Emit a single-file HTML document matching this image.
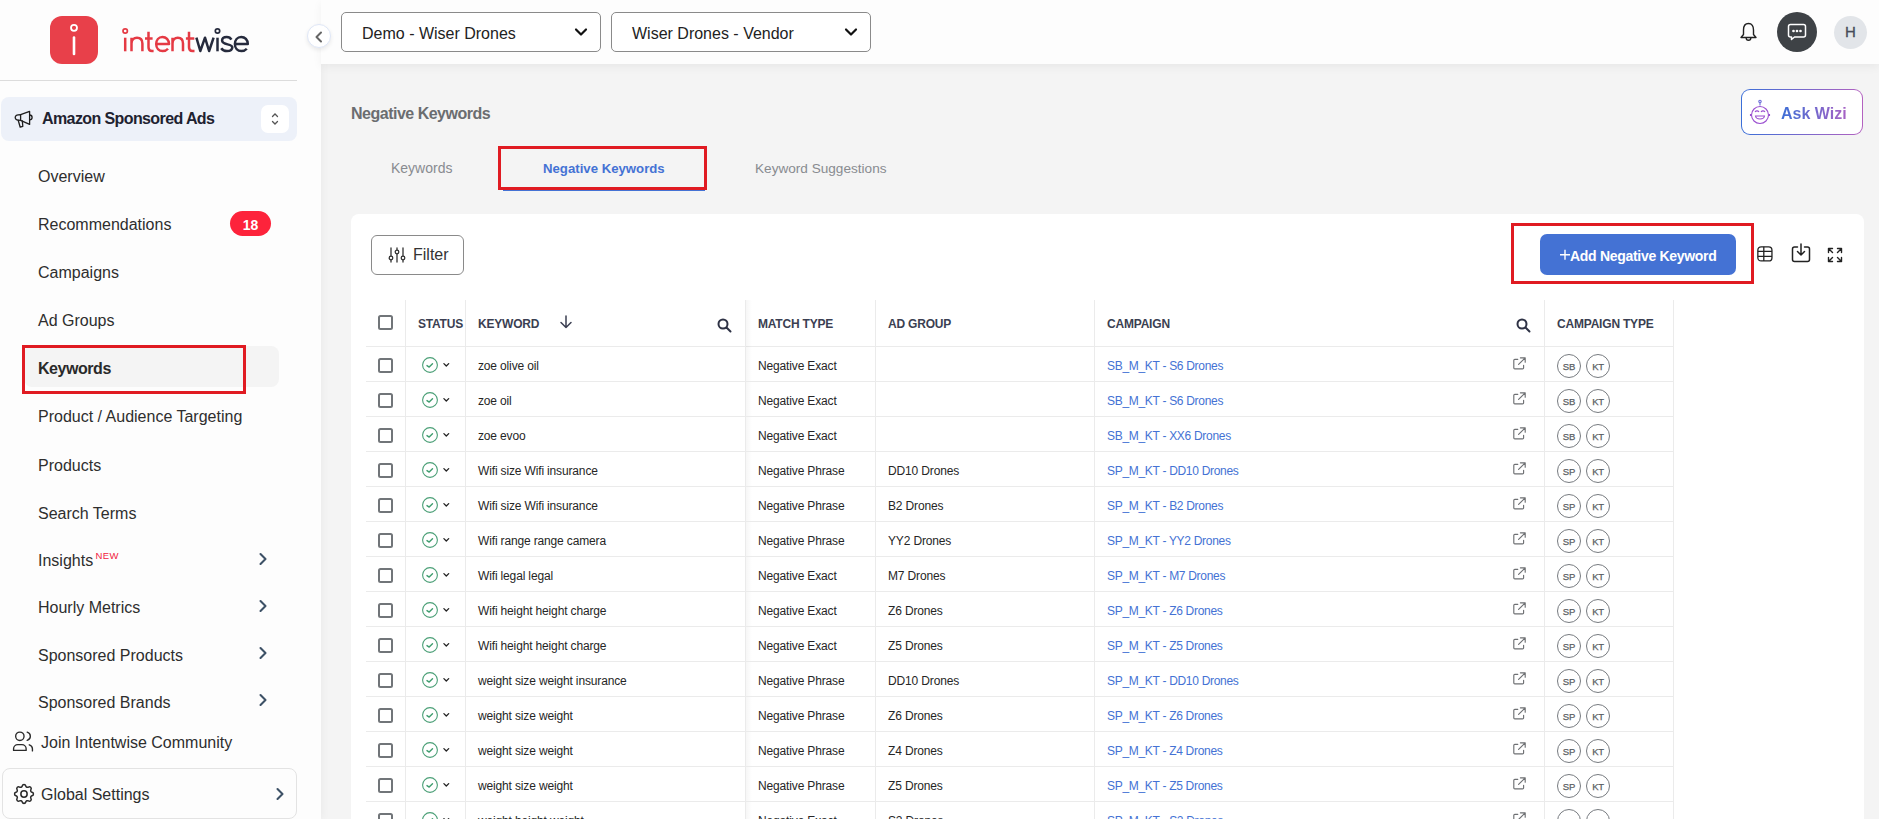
<!DOCTYPE html>
<html><head><meta charset="utf-8"><style>
*{margin:0;padding:0;box-sizing:content-box}
html,body{width:1879px;height:819px;overflow:hidden}
body{position:relative;background:#f4f4f4;font-family:"Liberation Sans",sans-serif;color:#333}
.a{position:absolute}
.t{position:absolute;white-space:nowrap}
#sb{position:absolute;left:0;top:0;width:321px;height:819px;background:#fdfdfd;box-shadow:2px 0 8px rgba(0,0,0,0.04)}
#hdr{position:absolute;left:321px;top:0;width:1558px;height:64px;background:#fdfdfd;box-shadow:0 3px 9px rgba(0,0,0,0.05)}
.ct{width:22px;height:22px;border:1px solid #777b80;border-radius:50%;font-size:9.5px;line-height:24px;text-align:center;color:#5a5e63;letter-spacing:-0.2px;-webkit-text-stroke:0.25px #5a5e63}
</style></head><body>
<div id="sb"></div>
<svg class="a" style="left:50px;top:16px" width="48" height="48" viewBox="0 0 48 48">
<rect x="0" y="0" width="48" height="48" rx="12" fill="#e8404a"/>
<circle cx="24" cy="11.8" r="3" fill="none" stroke="#fff" stroke-width="1.8"/>
<line x1="24" y1="21.5" x2="24" y2="38" stroke="#fff" stroke-width="2.6" stroke-linecap="round"/>
</svg>
<svg class="a" style="left:118px;top:24px" width="136" height="32" viewBox="0 0 136 32" fill="none" stroke-width="2.5" stroke-linejoin="round">
<g stroke="#e53a44">
<circle cx="7.2" cy="7" r="2.2" stroke-width="1.7"/><path d="M7.2 13.7 V27.3"/>
<path d="M13.5 27.3 V13.7 M13.5 19.5 C13.5 15.5 16 13.7 19 13.7 C22.2 13.7 24.4 15.5 24.4 19.5 V27.3"/>
<path d="M30.5 7.8 V23.2 C30.5 26 32 27 34 27 H35.6 M27 14.5 H34.6"/>
<path d="M38.2 20.1 H51 C51 16 48 12.9 44.5 12.9 C40.7 12.9 38.2 16 38.2 20.1 C38.2 24.3 40.9 27.1 44.6 27.1 C47 27.1 48.8 26.2 50 24.8"/>
<path d="M54.5 27.3 V13.7 M54.5 19.5 C54.5 15.5 57 13.7 59.8 13.7 C63 13.7 65 15.5 65 19.5 V27.3"/>
<path d="M71 7.8 V23.2 C71 26 72.5 27 74.5 27 H76.5 M67.9 14.5 H76.3"/>
</g>
<g stroke="#262b3d">
<path d="M78.4 13.7 L82.3 27 L87 13.7 L91.1 27 L95.6 13.7"/>
<circle cx="99.5" cy="7" r="2.2" stroke-width="1.7"/><path d="M99.5 13.7 V27.3"/>
<path d="M113.4 15.6 C112.5 13.7 110.8 12.9 108.7 12.9 C105.9 12.9 104.1 14.3 104.1 16.5 C104.1 21.5 114.3 19.3 114.3 23.3 C114.3 25.8 112.2 27.1 109 27.1 C106.5 27.1 104.5 26.2 103.2 24.3"/>
<path d="M116.9 20.1 H129.8 C129.8 16 127 12.9 123.2 12.9 C119.4 12.9 116.9 16 116.9 20.1 C116.9 24.3 119.6 27.1 123.3 27.1 C125.8 27.1 127.6 26.2 128.8 24.8"/>
</g></svg>
<div class="a" style="left:0;top:80px;width:297px;height:1px;background:#dcdcdc"></div>
<div class="a" style="left:1px;top:97px;width:296px;height:44px;border-radius:8px;background:#edf1f9"></div>
<svg class="a" style="left:12px;top:109px" width="22" height="20" viewBox="0 0 22 20" fill="none" stroke="#1e1e1e" stroke-width="1.3" stroke-linejoin="round" stroke-linecap="round">
<path d="M8.6 5.6 C5 5.6 3.2 7 3.2 8.4 C3.2 10 5 11.3 8.6 11.3 Z"/><path d="M8.6 5.6 L17.6 2.4 V15.4 L8.6 11.3"/><path d="M17.6 6 C19.5 6 20.1 7.2 20.1 8.5 C20.1 9.8 19.5 10.9 17.6 10.9"/><path d="M6.2 11.3 L8.2 18.2 L10.8 17.3 L10.3 11.8"/>
</svg>
<div class="t " style="left:42px;top:109.46px;font-size:16px;line-height:20px;color:#1e2230;font-weight:bold;letter-spacing:-0.6px;">Amazon Sponsored Ads</div>
<div class="a" style="left:261px;top:105px;width:28px;height:28px;border-radius:7px;background:#fff"></div>
<svg class="a" style="left:271px;top:112px" width="8" height="14" viewBox="0 0 8 14" fill="none" stroke="#555" stroke-width="1.3" stroke-linecap="round"><path d="M1.5 4.5 L4 2 L6.5 4.5"/><path d="M1.5 9.5 L4 12 L6.5 9.5"/></svg>
<div class="a" style="left:24px;top:346px;width:255px;height:41px;border-radius:8px;background:#f4f4f4"></div>
<div class="t " style="left:38px;top:167.06px;font-size:16px;line-height:20px;color:#2e2e2e;font-weight:normal;">Overview</div>
<div class="t " style="left:38px;top:215.06px;font-size:16px;line-height:20px;color:#2e2e2e;font-weight:normal;">Recommendations</div>
<div class="t " style="left:38px;top:263.06px;font-size:16px;line-height:20px;color:#2e2e2e;font-weight:normal;">Campaigns</div>
<div class="t " style="left:38px;top:311.06px;font-size:16px;line-height:20px;color:#2e2e2e;font-weight:normal;">Ad Groups</div>
<div class="t " style="left:38px;top:359.06px;font-size:16px;line-height:20px;color:#2a2a2a;font-weight:bold;letter-spacing:-0.45px;">Keywords</div>
<div class="t " style="left:38px;top:407.06px;font-size:16px;line-height:20px;color:#2e2e2e;font-weight:normal;">Product / Audience Targeting</div>
<div class="t " style="left:38px;top:455.96px;font-size:16px;line-height:20px;color:#2e2e2e;font-weight:normal;">Products</div>
<div class="t " style="left:38px;top:503.76px;font-size:16px;line-height:20px;color:#2e2e2e;font-weight:normal;">Search Terms</div>
<div class="t " style="left:38px;top:550.96px;font-size:16px;line-height:20px;color:#2e2e2e;font-weight:normal;">Insights</div>
<div class="t " style="left:38px;top:598.46px;font-size:16px;line-height:20px;color:#2e2e2e;font-weight:normal;">Hourly Metrics</div>
<div class="t " style="left:38px;top:645.66px;font-size:16px;line-height:20px;color:#2e2e2e;font-weight:normal;">Sponsored Products</div>
<div class="t " style="left:38px;top:692.86px;font-size:16px;line-height:20px;color:#2e2e2e;font-weight:normal;">Sponsored Brands</div>
<div class="a" style="left:230px;top:211px;width:41px;height:25px;border-radius:13px;background:#fd233b;color:#fff;font-weight:bold;font-size:14px;line-height:28.5px;text-align:center">18</div>
<div class="t " style="left:95.5px;top:549.71px;font-size:9.5px;line-height:12px;color:#f1233d;font-weight:normal;letter-spacing:0.4px;">NEW</div>
<svg class="a" style="left:257px;top:551.5px" width="12" height="14" viewBox="0 0 12 14" fill="none" stroke="#3d5166" stroke-width="2.1" stroke-linecap="round" stroke-linejoin="round"><path d="M3.5 2 L8.5 7 L3.5 12"/></svg>
<svg class="a" style="left:257px;top:599.0px" width="12" height="14" viewBox="0 0 12 14" fill="none" stroke="#3d5166" stroke-width="2.1" stroke-linecap="round" stroke-linejoin="round"><path d="M3.5 2 L8.5 7 L3.5 12"/></svg>
<svg class="a" style="left:257px;top:646.2px" width="12" height="14" viewBox="0 0 12 14" fill="none" stroke="#3d5166" stroke-width="2.1" stroke-linecap="round" stroke-linejoin="round"><path d="M3.5 2 L8.5 7 L3.5 12"/></svg>
<svg class="a" style="left:257px;top:693.4px" width="12" height="14" viewBox="0 0 12 14" fill="none" stroke="#3d5166" stroke-width="2.1" stroke-linecap="round" stroke-linejoin="round"><path d="M3.5 2 L8.5 7 L3.5 12"/></svg>
<div class="a" style="left:22px;top:345px;width:218px;height:43px;border:3px solid #e01b22"></div>
<svg class="a" style="left:12px;top:730.5px" width="22" height="21" viewBox="1.5 2 21 20" fill="none" stroke="#2a2a2a" stroke-width="1.3" stroke-linecap="round" stroke-linejoin="round">
<circle cx="9" cy="7" r="4"/><path d="M3 20.5 v-1.5 a4 4 0 0 1 4 -4 h4 a4 4 0 0 1 4 4 v1.5 Z"/><path d="M16 3.13 a4 4 0 0 1 0 7.75"/><path d="M21 21 v-2 a4 4 0 0 0 -3 -3.85"/>
</svg>
<div class="t " style="left:41px;top:733.46px;font-size:16px;line-height:20px;color:#2e2e2e;font-weight:normal;">Join Intentwise Community</div>
<div class="a" style="left:2px;top:768px;width:293px;height:49px;border:1px solid #e3e3e3;border-radius:8px;background:#fdfdfd"></div>
<svg class="a" style="left:13px;top:782.5px" width="22" height="22" viewBox="1.5 1.5 21 21" fill="none" stroke="#2a2a2a" stroke-width="1.45" stroke-linecap="round" stroke-linejoin="round">
<path d="M10.325 4.317c.426 -1.756 2.924 -1.756 3.35 0a1.724 1.724 0 0 0 2.573 1.066c1.543 -.94 3.31 .826 2.37 2.37a1.724 1.724 0 0 0 1.065 2.572c1.756 .426 1.756 2.924 0 3.35a1.724 1.724 0 0 0 -1.066 2.573c.94 1.543 -.826 3.31 -2.37 2.37a1.724 1.724 0 0 0 -2.572 1.065c-.426 1.756 -2.924 1.756 -3.35 0a1.724 1.724 0 0 0 -2.573 -1.066c-1.543 .94 -3.310 -.826 -2.37 -2.37a1.724 1.724 0 0 0 -1.065 -2.572c-1.756 -.426 -1.756 -2.924 0 -3.35a1.724 1.724 0 0 0 1.066 -2.573c-.94 -1.543 .826 -3.31 2.37 -2.37c1 .608 2.296 .07 2.572 -1.065z"/><circle cx="12" cy="12" r="3"/>
</svg>
<div class="t " style="left:41px;top:785.46px;font-size:16px;line-height:20px;color:#2e2e2e;font-weight:normal;">Global Settings</div>
<svg class="a" style="left:274px;top:787px" width="12" height="14" viewBox="0 0 12 14" fill="none" stroke="#3d5166" stroke-width="2.1" stroke-linecap="round" stroke-linejoin="round"><path d="M3.5 2 L8.5 7 L3.5 12"/></svg>
<div id="hdr"></div>
<div class="a" style="left:307px;top:24px;width:22px;height:22px;border-radius:50%;background:#fff;border:1px solid #dfe7f7;box-shadow:0 2px 4px rgba(0,0,0,0.08)"></div>
<svg class="a" style="left:312.5px;top:29.5px" width="12" height="14" viewBox="0 0 12 14" fill="none" stroke="#666" stroke-width="2" stroke-linecap="round" stroke-linejoin="round"><path d="M8 2.5 L3.5 7 L8 11.5"/></svg>
<div class="a" style="left:341px;top:12px;width:258px;height:38px;border:1px solid #8a8a8a;border-radius:5px;background:#fff"></div>
<div class="t " style="left:362px;top:23.96px;font-size:16px;line-height:20px;color:#222;font-weight:normal;">Demo - Wiser Drones</div>
<svg class="a" style="left:574px;top:27px" width="14" height="10" viewBox="0 0 14 10" fill="none" stroke="#111" stroke-width="2.2" stroke-linecap="round" stroke-linejoin="round"><path d="M2 2.5 L7 7.5 L12 2.5"/></svg>
<div class="a" style="left:611px;top:12px;width:258px;height:38px;border:1px solid #8a8a8a;border-radius:5px;background:#fff"></div>
<div class="t " style="left:632px;top:23.96px;font-size:16px;line-height:20px;color:#222;font-weight:normal;">Wiser Drones - Vendor</div>
<svg class="a" style="left:844px;top:27px" width="14" height="10" viewBox="0 0 14 10" fill="none" stroke="#111" stroke-width="2.2" stroke-linecap="round" stroke-linejoin="round"><path d="M2 2.5 L7 7.5 L12 2.5"/></svg>
<svg class="a" style="left:1739px;top:22px" width="19" height="20" viewBox="0 0 19 20" fill="none" stroke="#222" stroke-width="1.4" stroke-linejoin="round">
<path d="M9.5 1.5 C6 1.5 4.5 4.5 4.5 8 V12.5 L2 15.5 H17 L14.5 12.5 V8 C14.5 4.5 13 1.5 9.5 1.5 Z"/><path d="M7.2 16 C7.2 19 11.8 19 11.8 16"/>
</svg>
<div class="a" style="left:1777px;top:12px;width:40px;height:40px;border-radius:50%;background:#3e4246"></div>
<svg class="a" style="left:1787px;top:23px" width="20" height="19" viewBox="0 0 20 19" fill="none" stroke="#fff" stroke-width="1.5" stroke-linejoin="round">
<path d="M3.5 1.5 H16.5 C17.8 1.5 18.5 2.2 18.5 3.5 V12 C18.5 13.3 17.8 14 16.5 14 H7.5 L4.5 16.5 V14 H3.5 C2.2 14 1.5 13.3 1.5 12 V3.5 C1.5 2.2 2.2 1.5 3.5 1.5 Z"/>
<circle cx="6.5" cy="8" r="0.6" fill="#fff"/><circle cx="10" cy="8" r="0.6" fill="#fff"/><circle cx="13.5" cy="8" r="0.6" fill="#fff"/>
</svg>
<div class="a" style="left:1834px;top:16px;width:33px;height:33px;border-radius:50%;background:#e2e5e9;color:#464c5a;font-size:15px;line-height:31px;text-align:center;-webkit-text-stroke:0.3px #464c5a">H</div>
<div class="t " style="left:351px;top:103.96px;font-size:16px;line-height:20px;color:#6b6d70;font-weight:bold;letter-spacing:-0.5px;">Negative Keywords</div>
<div class="a" style="left:1741px;top:89px;width:122px;height:46px;border-radius:9px;background:linear-gradient(90deg,#3a6fd8,#b462c0)"></div>
<div class="a" style="left:1742px;top:90px;width:120px;height:44px;border-radius:8px;background:#fff"></div>
<svg class="a" style="left:1749px;top:99px" width="24" height="27" viewBox="0 0 24 27" fill="none" stroke="#9b4fd0" stroke-width="1.1">
<circle cx="11" cy="2.5" r="1.2" stroke="#6a6ad8"/><path d="M11 3.8 V6.5" stroke="#6a6ad8"/>
<circle cx="11" cy="16" r="8.5"/><path d="M6 13 C7 11.5 9 11.5 10 13 M12 13 C13 11.5 15 11.5 16 13"/><path d="M6.5 17 H15.5 C15 21 7 21 6.5 17 Z"/><path d="M1.5 15 V17 M20.5 15 V17"/>
</svg>
<div class="t " style="left:1781px;top:103.96px;font-size:16px;line-height:20px;color:#5b6fd6;font-weight:bold;background:linear-gradient(90deg,#3e6fd6,#a862c4);-webkit-background-clip:text;background-clip:text;color:transparent;">Ask Wizi</div>
<div class="t " style="left:391px;top:158.15px;font-size:14px;line-height:20px;color:#888b90;font-weight:normal;">Keywords</div>
<div class="t " style="left:543px;top:158.93px;font-size:13.2px;line-height:20px;color:#4472d4;font-weight:bold;">Negative Keywords</div>
<div class="t " style="left:755px;top:158.79px;font-size:13.6px;line-height:20px;color:#888b90;font-weight:normal;">Keyword Suggestions</div>
<div class="a" style="left:503px;top:189px;width:202px;height:2px;background:#4472d4"></div>
<div class="a" style="left:498px;top:146px;width:203px;height:38px;border:3px solid #e01b22"></div>
<div class="a" style="left:351px;top:214px;width:1513px;height:640px;border-radius:8px;background:#fff"></div>
<div class="a" style="left:371px;top:235px;width:91px;height:38px;border:1px solid #8a8a8a;border-radius:6px"></div>
<svg class="a" style="left:388px;top:247px" width="18" height="16" viewBox="0 0 18 16" fill="none" stroke="#333" stroke-width="1.3" stroke-linecap="round">
<path d="M3 1 V15 M9 1 V15 M15 1 V15"/><circle cx="3" cy="11" r="1.8" fill="#fff"/><circle cx="9" cy="5" r="1.8" fill="#fff"/><circle cx="15" cy="11" r="1.8" fill="#fff"/>
</svg>
<div class="t " style="left:413px;top:245.46px;font-size:16px;line-height:20px;color:#333;font-weight:normal;">Filter</div>
<div class="a" style="left:1540px;top:234px;width:196px;height:41px;border-radius:7px;background:#4472d4"></div>
<svg class="a" style="left:1559px;top:248px" width="12" height="14" viewBox="0 0 12 14" fill="none" stroke="#fff" stroke-width="1.4"><path d="M1 6.8 H11 M6 1.8 V11.8"/></svg>
<div class="t " style="left:1570px;top:245.55px;font-size:14px;line-height:20px;color:#fff;font-weight:bold;letter-spacing:-0.3px;">Add Negative Keyword</div>
<div class="a" style="left:1511px;top:223px;width:237px;height:55px;border:3px solid #e01b22"></div>
<svg class="a" style="left:1756px;top:245px" width="18" height="18" viewBox="0 0 18 18" fill="none" stroke="#222" stroke-width="1.3">
<rect x="1.85" y="1.85" width="14.1" height="14.1" rx="3.3"/><path d="M1.85 6.3 H15.95 M1.85 11.4 H15.95 M7.8 1.85 V15.95"/>
</svg>
<svg class="a" style="left:1791px;top:243px" width="20" height="20" viewBox="0 0 20 20" fill="none" stroke="#222" stroke-width="1.5" stroke-linecap="round" stroke-linejoin="round">
<path d="M6.5 4 H3.5 C2.3 4 1.5 4.8 1.5 6 V16.5 C1.5 17.7 2.3 18.5 3.5 18.5 H16.5 C17.7 18.5 18.5 17.7 18.5 16.5 V6 C18.5 4.8 17.7 4 16.5 4 H13.5"/><path d="M10 1 V12 M6.5 8.5 L10 12 L13.5 8.5"/>
</svg>
<svg class="a" style="left:1827px;top:247px" width="16" height="16" viewBox="0 0 16 16" fill="none" stroke="#222" stroke-width="1.4" stroke-linecap="round" stroke-linejoin="round">
<path d="M1.5 5.5 V1.5 H5.5 M1.5 1.5 L5.5 5.5 M10.5 1.5 H14.5 V5.5 M14.5 1.5 L10.5 5.5 M1.5 10.5 V14.5 H5.5 M1.5 14.5 L5.5 10.5 M14.5 10.5 V14.5 H10.5 M14.5 14.5 L10.5 10.5"/>
</svg>
<div class="a" style="left:405px;top:300px;width:1px;height:46px;background:#ebebeb"></div>
<div class="a" style="left:465px;top:300px;width:1px;height:46px;background:#ebebeb"></div>
<div class="a" style="left:745px;top:300px;width:1px;height:46px;background:#ebebeb"></div>
<div class="a" style="left:875px;top:300px;width:1px;height:46px;background:#ebebeb"></div>
<div class="a" style="left:1094px;top:300px;width:1px;height:46px;background:#ebebeb"></div>
<div class="a" style="left:1544px;top:300px;width:1px;height:46px;background:#ebebeb"></div>
<div class="a" style="left:1673px;top:300px;width:1px;height:46px;background:#ebebeb"></div>
<div class="a" style="left:366px;top:346px;width:1308px;height:1px;background:#ebebeb"></div>
<div class="a" style="left:378px;top:315px;width:11px;height:11px;border:2px solid #717579;border-radius:2.5px"></div>
<div class="t " style="left:418px;top:315.54px;font-size:12px;line-height:16px;color:#3b3f52;font-weight:bold;letter-spacing:-0.2px;">STATUS</div>
<div class="t " style="left:478px;top:315.54px;font-size:12px;line-height:16px;color:#3b3f52;font-weight:bold;letter-spacing:-0.2px;">KEYWORD</div>
<div class="t " style="left:758px;top:315.54px;font-size:12px;line-height:16px;color:#3b3f52;font-weight:bold;letter-spacing:-0.2px;">MATCH TYPE</div>
<div class="t " style="left:888px;top:315.54px;font-size:12px;line-height:16px;color:#3b3f52;font-weight:bold;letter-spacing:-0.2px;">AD GROUP</div>
<div class="t " style="left:1107px;top:315.54px;font-size:12px;line-height:16px;color:#3b3f52;font-weight:bold;letter-spacing:-0.2px;">CAMPAIGN</div>
<div class="t " style="left:1557px;top:315.54px;font-size:12px;line-height:16px;color:#3b3f52;font-weight:bold;letter-spacing:-0.2px;">CAMPAIGN TYPE</div>
<svg class="a" style="left:559px;top:315px" width="14" height="14" viewBox="0 0 14 14" fill="none" stroke="#3b3f52" stroke-width="1.5" stroke-linecap="round" stroke-linejoin="round"><path d="M7 1 V12.5 M2 7.5 L7 12.5 L12 7.5"/></svg>
<svg class="a" style="left:717px;top:318px" width="15" height="15" viewBox="0 0 15 15" fill="none" stroke="#2e3245" stroke-width="2" stroke-linecap="round"><circle cx="6" cy="6" r="4.5"/><path d="M9.5 9.5 L13.5 13.5"/></svg>
<svg class="a" style="left:1516px;top:318px" width="15" height="15" viewBox="0 0 15 15" fill="none" stroke="#2e3245" stroke-width="2" stroke-linecap="round"><circle cx="6" cy="6" r="4.5"/><path d="M9.5 9.5 L13.5 13.5"/></svg>
<div class="a" style="left:746px;top:300px;width:6px;height:540px;background:linear-gradient(90deg,rgba(0,0,0,0.035),rgba(0,0,0,0))"></div>
<div class="a" style="left:405px;top:347px;width:1px;height:34px;background:#ebebeb"></div>
<div class="a" style="left:465px;top:347px;width:1px;height:34px;background:#ebebeb"></div>
<div class="a" style="left:745px;top:347px;width:1px;height:34px;background:#ebebeb"></div>
<div class="a" style="left:875px;top:347px;width:1px;height:34px;background:#ebebeb"></div>
<div class="a" style="left:1094px;top:347px;width:1px;height:34px;background:#ebebeb"></div>
<div class="a" style="left:1544px;top:347px;width:1px;height:34px;background:#ebebeb"></div>
<div class="a" style="left:1673px;top:347px;width:1px;height:34px;background:#ebebeb"></div>
<div class="a" style="left:366px;top:381px;width:1308px;height:1px;background:#ebebeb"></div>
<div class="a" style="left:378px;top:358px;width:11px;height:11px;border:2px solid #717579;border-radius:2.5px"></div>
<svg class="a" style="left:421px;top:356px" width="30" height="18" viewBox="0 0 30 18" fill="none"><circle cx="9" cy="9" r="7.4" stroke="#4a9f76" stroke-width="1.1"/><path d="M6 9.6 L8.2 11.1 L11.5 7.8" stroke="#3f9d6e" stroke-width="1.4" stroke-linecap="round" stroke-linejoin="round"/><path d="M22.9 7.6 L25.3 10 L27.7 7.6" stroke="#222" stroke-width="1.3" stroke-linecap="round" stroke-linejoin="round"/></svg>
<div class="t " style="left:478px;top:357.84px;font-size:12px;line-height:16px;color:#262626;font-weight:normal;letter-spacing:-0.15px;">zoe olive oil</div>
<div class="t " style="left:758px;top:357.84px;font-size:12px;line-height:16px;color:#262626;font-weight:normal;letter-spacing:-0.15px;">Negative Exact</div>
<div class="t " style="left:1107px;top:357.84px;font-size:12px;line-height:16px;color:#4472d4;font-weight:normal;letter-spacing:-0.3px;">SB_M_KT - S6 Drones</div>
<svg class="a" style="left:1512px;top:356px" width="15" height="15" viewBox="0 0 15 15" fill="none" stroke="#6e7073" stroke-width="1.15" stroke-linecap="round" stroke-linejoin="round"><path d="M5.8 3.3 H2.8 C2.1 3.3 1.8 3.6 1.8 4.3 V12 C1.8 12.6 2.1 12.9 2.8 12.9 H10.6 C11.3 12.9 11.6 12.6 11.6 12 V9.3"/><path d="M8.4 1.8 H13.2 V6.2 M13.2 1.8 L6.6 8.4"/></svg>
<div class="a ct" style="left:1557px;top:354px">SB</div>
<div class="a ct" style="left:1586px;top:354px">KT</div>
<div class="a" style="left:405px;top:382px;width:1px;height:34px;background:#ebebeb"></div>
<div class="a" style="left:465px;top:382px;width:1px;height:34px;background:#ebebeb"></div>
<div class="a" style="left:745px;top:382px;width:1px;height:34px;background:#ebebeb"></div>
<div class="a" style="left:875px;top:382px;width:1px;height:34px;background:#ebebeb"></div>
<div class="a" style="left:1094px;top:382px;width:1px;height:34px;background:#ebebeb"></div>
<div class="a" style="left:1544px;top:382px;width:1px;height:34px;background:#ebebeb"></div>
<div class="a" style="left:1673px;top:382px;width:1px;height:34px;background:#ebebeb"></div>
<div class="a" style="left:366px;top:416px;width:1308px;height:1px;background:#ebebeb"></div>
<div class="a" style="left:378px;top:393px;width:11px;height:11px;border:2px solid #717579;border-radius:2.5px"></div>
<svg class="a" style="left:421px;top:391px" width="30" height="18" viewBox="0 0 30 18" fill="none"><circle cx="9" cy="9" r="7.4" stroke="#4a9f76" stroke-width="1.1"/><path d="M6 9.6 L8.2 11.1 L11.5 7.8" stroke="#3f9d6e" stroke-width="1.4" stroke-linecap="round" stroke-linejoin="round"/><path d="M22.9 7.6 L25.3 10 L27.7 7.6" stroke="#222" stroke-width="1.3" stroke-linecap="round" stroke-linejoin="round"/></svg>
<div class="t " style="left:478px;top:392.84px;font-size:12px;line-height:16px;color:#262626;font-weight:normal;letter-spacing:-0.15px;">zoe oil</div>
<div class="t " style="left:758px;top:392.84px;font-size:12px;line-height:16px;color:#262626;font-weight:normal;letter-spacing:-0.15px;">Negative Exact</div>
<div class="t " style="left:1107px;top:392.84px;font-size:12px;line-height:16px;color:#4472d4;font-weight:normal;letter-spacing:-0.3px;">SB_M_KT - S6 Drones</div>
<svg class="a" style="left:1512px;top:391px" width="15" height="15" viewBox="0 0 15 15" fill="none" stroke="#6e7073" stroke-width="1.15" stroke-linecap="round" stroke-linejoin="round"><path d="M5.8 3.3 H2.8 C2.1 3.3 1.8 3.6 1.8 4.3 V12 C1.8 12.6 2.1 12.9 2.8 12.9 H10.6 C11.3 12.9 11.6 12.6 11.6 12 V9.3"/><path d="M8.4 1.8 H13.2 V6.2 M13.2 1.8 L6.6 8.4"/></svg>
<div class="a ct" style="left:1557px;top:389px">SB</div>
<div class="a ct" style="left:1586px;top:389px">KT</div>
<div class="a" style="left:405px;top:417px;width:1px;height:34px;background:#ebebeb"></div>
<div class="a" style="left:465px;top:417px;width:1px;height:34px;background:#ebebeb"></div>
<div class="a" style="left:745px;top:417px;width:1px;height:34px;background:#ebebeb"></div>
<div class="a" style="left:875px;top:417px;width:1px;height:34px;background:#ebebeb"></div>
<div class="a" style="left:1094px;top:417px;width:1px;height:34px;background:#ebebeb"></div>
<div class="a" style="left:1544px;top:417px;width:1px;height:34px;background:#ebebeb"></div>
<div class="a" style="left:1673px;top:417px;width:1px;height:34px;background:#ebebeb"></div>
<div class="a" style="left:366px;top:451px;width:1308px;height:1px;background:#ebebeb"></div>
<div class="a" style="left:378px;top:428px;width:11px;height:11px;border:2px solid #717579;border-radius:2.5px"></div>
<svg class="a" style="left:421px;top:426px" width="30" height="18" viewBox="0 0 30 18" fill="none"><circle cx="9" cy="9" r="7.4" stroke="#4a9f76" stroke-width="1.1"/><path d="M6 9.6 L8.2 11.1 L11.5 7.8" stroke="#3f9d6e" stroke-width="1.4" stroke-linecap="round" stroke-linejoin="round"/><path d="M22.9 7.6 L25.3 10 L27.7 7.6" stroke="#222" stroke-width="1.3" stroke-linecap="round" stroke-linejoin="round"/></svg>
<div class="t " style="left:478px;top:427.84px;font-size:12px;line-height:16px;color:#262626;font-weight:normal;letter-spacing:-0.15px;">zoe evoo</div>
<div class="t " style="left:758px;top:427.84px;font-size:12px;line-height:16px;color:#262626;font-weight:normal;letter-spacing:-0.15px;">Negative Exact</div>
<div class="t " style="left:1107px;top:427.84px;font-size:12px;line-height:16px;color:#4472d4;font-weight:normal;letter-spacing:-0.3px;">SB_M_KT - XX6 Drones</div>
<svg class="a" style="left:1512px;top:426px" width="15" height="15" viewBox="0 0 15 15" fill="none" stroke="#6e7073" stroke-width="1.15" stroke-linecap="round" stroke-linejoin="round"><path d="M5.8 3.3 H2.8 C2.1 3.3 1.8 3.6 1.8 4.3 V12 C1.8 12.6 2.1 12.9 2.8 12.9 H10.6 C11.3 12.9 11.6 12.6 11.6 12 V9.3"/><path d="M8.4 1.8 H13.2 V6.2 M13.2 1.8 L6.6 8.4"/></svg>
<div class="a ct" style="left:1557px;top:424px">SB</div>
<div class="a ct" style="left:1586px;top:424px">KT</div>
<div class="a" style="left:405px;top:452px;width:1px;height:34px;background:#ebebeb"></div>
<div class="a" style="left:465px;top:452px;width:1px;height:34px;background:#ebebeb"></div>
<div class="a" style="left:745px;top:452px;width:1px;height:34px;background:#ebebeb"></div>
<div class="a" style="left:875px;top:452px;width:1px;height:34px;background:#ebebeb"></div>
<div class="a" style="left:1094px;top:452px;width:1px;height:34px;background:#ebebeb"></div>
<div class="a" style="left:1544px;top:452px;width:1px;height:34px;background:#ebebeb"></div>
<div class="a" style="left:1673px;top:452px;width:1px;height:34px;background:#ebebeb"></div>
<div class="a" style="left:366px;top:486px;width:1308px;height:1px;background:#ebebeb"></div>
<div class="a" style="left:378px;top:463px;width:11px;height:11px;border:2px solid #717579;border-radius:2.5px"></div>
<svg class="a" style="left:421px;top:461px" width="30" height="18" viewBox="0 0 30 18" fill="none"><circle cx="9" cy="9" r="7.4" stroke="#4a9f76" stroke-width="1.1"/><path d="M6 9.6 L8.2 11.1 L11.5 7.8" stroke="#3f9d6e" stroke-width="1.4" stroke-linecap="round" stroke-linejoin="round"/><path d="M22.9 7.6 L25.3 10 L27.7 7.6" stroke="#222" stroke-width="1.3" stroke-linecap="round" stroke-linejoin="round"/></svg>
<div class="t " style="left:478px;top:462.84px;font-size:12px;line-height:16px;color:#262626;font-weight:normal;letter-spacing:-0.15px;">Wifi size Wifi insurance</div>
<div class="t " style="left:758px;top:462.84px;font-size:12px;line-height:16px;color:#262626;font-weight:normal;letter-spacing:-0.15px;">Negative Phrase</div>
<div class="t " style="left:888px;top:462.84px;font-size:12px;line-height:16px;color:#262626;font-weight:normal;letter-spacing:-0.15px;">DD10 Drones</div>
<div class="t " style="left:1107px;top:462.84px;font-size:12px;line-height:16px;color:#4472d4;font-weight:normal;letter-spacing:-0.3px;">SP_M_KT - DD10 Drones</div>
<svg class="a" style="left:1512px;top:461px" width="15" height="15" viewBox="0 0 15 15" fill="none" stroke="#6e7073" stroke-width="1.15" stroke-linecap="round" stroke-linejoin="round"><path d="M5.8 3.3 H2.8 C2.1 3.3 1.8 3.6 1.8 4.3 V12 C1.8 12.6 2.1 12.9 2.8 12.9 H10.6 C11.3 12.9 11.6 12.6 11.6 12 V9.3"/><path d="M8.4 1.8 H13.2 V6.2 M13.2 1.8 L6.6 8.4"/></svg>
<div class="a ct" style="left:1557px;top:459px">SP</div>
<div class="a ct" style="left:1586px;top:459px">KT</div>
<div class="a" style="left:405px;top:487px;width:1px;height:34px;background:#ebebeb"></div>
<div class="a" style="left:465px;top:487px;width:1px;height:34px;background:#ebebeb"></div>
<div class="a" style="left:745px;top:487px;width:1px;height:34px;background:#ebebeb"></div>
<div class="a" style="left:875px;top:487px;width:1px;height:34px;background:#ebebeb"></div>
<div class="a" style="left:1094px;top:487px;width:1px;height:34px;background:#ebebeb"></div>
<div class="a" style="left:1544px;top:487px;width:1px;height:34px;background:#ebebeb"></div>
<div class="a" style="left:1673px;top:487px;width:1px;height:34px;background:#ebebeb"></div>
<div class="a" style="left:366px;top:521px;width:1308px;height:1px;background:#ebebeb"></div>
<div class="a" style="left:378px;top:498px;width:11px;height:11px;border:2px solid #717579;border-radius:2.5px"></div>
<svg class="a" style="left:421px;top:496px" width="30" height="18" viewBox="0 0 30 18" fill="none"><circle cx="9" cy="9" r="7.4" stroke="#4a9f76" stroke-width="1.1"/><path d="M6 9.6 L8.2 11.1 L11.5 7.8" stroke="#3f9d6e" stroke-width="1.4" stroke-linecap="round" stroke-linejoin="round"/><path d="M22.9 7.6 L25.3 10 L27.7 7.6" stroke="#222" stroke-width="1.3" stroke-linecap="round" stroke-linejoin="round"/></svg>
<div class="t " style="left:478px;top:497.84px;font-size:12px;line-height:16px;color:#262626;font-weight:normal;letter-spacing:-0.15px;">Wifi size Wifi insurance</div>
<div class="t " style="left:758px;top:497.84px;font-size:12px;line-height:16px;color:#262626;font-weight:normal;letter-spacing:-0.15px;">Negative Phrase</div>
<div class="t " style="left:888px;top:497.84px;font-size:12px;line-height:16px;color:#262626;font-weight:normal;letter-spacing:-0.15px;">B2 Drones</div>
<div class="t " style="left:1107px;top:497.84px;font-size:12px;line-height:16px;color:#4472d4;font-weight:normal;letter-spacing:-0.3px;">SP_M_KT - B2 Drones</div>
<svg class="a" style="left:1512px;top:496px" width="15" height="15" viewBox="0 0 15 15" fill="none" stroke="#6e7073" stroke-width="1.15" stroke-linecap="round" stroke-linejoin="round"><path d="M5.8 3.3 H2.8 C2.1 3.3 1.8 3.6 1.8 4.3 V12 C1.8 12.6 2.1 12.9 2.8 12.9 H10.6 C11.3 12.9 11.6 12.6 11.6 12 V9.3"/><path d="M8.4 1.8 H13.2 V6.2 M13.2 1.8 L6.6 8.4"/></svg>
<div class="a ct" style="left:1557px;top:494px">SP</div>
<div class="a ct" style="left:1586px;top:494px">KT</div>
<div class="a" style="left:405px;top:522px;width:1px;height:34px;background:#ebebeb"></div>
<div class="a" style="left:465px;top:522px;width:1px;height:34px;background:#ebebeb"></div>
<div class="a" style="left:745px;top:522px;width:1px;height:34px;background:#ebebeb"></div>
<div class="a" style="left:875px;top:522px;width:1px;height:34px;background:#ebebeb"></div>
<div class="a" style="left:1094px;top:522px;width:1px;height:34px;background:#ebebeb"></div>
<div class="a" style="left:1544px;top:522px;width:1px;height:34px;background:#ebebeb"></div>
<div class="a" style="left:1673px;top:522px;width:1px;height:34px;background:#ebebeb"></div>
<div class="a" style="left:366px;top:556px;width:1308px;height:1px;background:#ebebeb"></div>
<div class="a" style="left:378px;top:533px;width:11px;height:11px;border:2px solid #717579;border-radius:2.5px"></div>
<svg class="a" style="left:421px;top:531px" width="30" height="18" viewBox="0 0 30 18" fill="none"><circle cx="9" cy="9" r="7.4" stroke="#4a9f76" stroke-width="1.1"/><path d="M6 9.6 L8.2 11.1 L11.5 7.8" stroke="#3f9d6e" stroke-width="1.4" stroke-linecap="round" stroke-linejoin="round"/><path d="M22.9 7.6 L25.3 10 L27.7 7.6" stroke="#222" stroke-width="1.3" stroke-linecap="round" stroke-linejoin="round"/></svg>
<div class="t " style="left:478px;top:532.84px;font-size:12px;line-height:16px;color:#262626;font-weight:normal;letter-spacing:-0.15px;">Wifi range range camera</div>
<div class="t " style="left:758px;top:532.84px;font-size:12px;line-height:16px;color:#262626;font-weight:normal;letter-spacing:-0.15px;">Negative Phrase</div>
<div class="t " style="left:888px;top:532.84px;font-size:12px;line-height:16px;color:#262626;font-weight:normal;letter-spacing:-0.15px;">YY2 Drones</div>
<div class="t " style="left:1107px;top:532.84px;font-size:12px;line-height:16px;color:#4472d4;font-weight:normal;letter-spacing:-0.3px;">SP_M_KT - YY2 Drones</div>
<svg class="a" style="left:1512px;top:531px" width="15" height="15" viewBox="0 0 15 15" fill="none" stroke="#6e7073" stroke-width="1.15" stroke-linecap="round" stroke-linejoin="round"><path d="M5.8 3.3 H2.8 C2.1 3.3 1.8 3.6 1.8 4.3 V12 C1.8 12.6 2.1 12.9 2.8 12.9 H10.6 C11.3 12.9 11.6 12.6 11.6 12 V9.3"/><path d="M8.4 1.8 H13.2 V6.2 M13.2 1.8 L6.6 8.4"/></svg>
<div class="a ct" style="left:1557px;top:529px">SP</div>
<div class="a ct" style="left:1586px;top:529px">KT</div>
<div class="a" style="left:405px;top:557px;width:1px;height:34px;background:#ebebeb"></div>
<div class="a" style="left:465px;top:557px;width:1px;height:34px;background:#ebebeb"></div>
<div class="a" style="left:745px;top:557px;width:1px;height:34px;background:#ebebeb"></div>
<div class="a" style="left:875px;top:557px;width:1px;height:34px;background:#ebebeb"></div>
<div class="a" style="left:1094px;top:557px;width:1px;height:34px;background:#ebebeb"></div>
<div class="a" style="left:1544px;top:557px;width:1px;height:34px;background:#ebebeb"></div>
<div class="a" style="left:1673px;top:557px;width:1px;height:34px;background:#ebebeb"></div>
<div class="a" style="left:366px;top:591px;width:1308px;height:1px;background:#ebebeb"></div>
<div class="a" style="left:378px;top:568px;width:11px;height:11px;border:2px solid #717579;border-radius:2.5px"></div>
<svg class="a" style="left:421px;top:566px" width="30" height="18" viewBox="0 0 30 18" fill="none"><circle cx="9" cy="9" r="7.4" stroke="#4a9f76" stroke-width="1.1"/><path d="M6 9.6 L8.2 11.1 L11.5 7.8" stroke="#3f9d6e" stroke-width="1.4" stroke-linecap="round" stroke-linejoin="round"/><path d="M22.9 7.6 L25.3 10 L27.7 7.6" stroke="#222" stroke-width="1.3" stroke-linecap="round" stroke-linejoin="round"/></svg>
<div class="t " style="left:478px;top:567.84px;font-size:12px;line-height:16px;color:#262626;font-weight:normal;letter-spacing:-0.15px;">Wifi legal legal</div>
<div class="t " style="left:758px;top:567.84px;font-size:12px;line-height:16px;color:#262626;font-weight:normal;letter-spacing:-0.15px;">Negative Exact</div>
<div class="t " style="left:888px;top:567.84px;font-size:12px;line-height:16px;color:#262626;font-weight:normal;letter-spacing:-0.15px;">M7 Drones</div>
<div class="t " style="left:1107px;top:567.84px;font-size:12px;line-height:16px;color:#4472d4;font-weight:normal;letter-spacing:-0.3px;">SP_M_KT - M7 Drones</div>
<svg class="a" style="left:1512px;top:566px" width="15" height="15" viewBox="0 0 15 15" fill="none" stroke="#6e7073" stroke-width="1.15" stroke-linecap="round" stroke-linejoin="round"><path d="M5.8 3.3 H2.8 C2.1 3.3 1.8 3.6 1.8 4.3 V12 C1.8 12.6 2.1 12.9 2.8 12.9 H10.6 C11.3 12.9 11.6 12.6 11.6 12 V9.3"/><path d="M8.4 1.8 H13.2 V6.2 M13.2 1.8 L6.6 8.4"/></svg>
<div class="a ct" style="left:1557px;top:564px">SP</div>
<div class="a ct" style="left:1586px;top:564px">KT</div>
<div class="a" style="left:405px;top:592px;width:1px;height:34px;background:#ebebeb"></div>
<div class="a" style="left:465px;top:592px;width:1px;height:34px;background:#ebebeb"></div>
<div class="a" style="left:745px;top:592px;width:1px;height:34px;background:#ebebeb"></div>
<div class="a" style="left:875px;top:592px;width:1px;height:34px;background:#ebebeb"></div>
<div class="a" style="left:1094px;top:592px;width:1px;height:34px;background:#ebebeb"></div>
<div class="a" style="left:1544px;top:592px;width:1px;height:34px;background:#ebebeb"></div>
<div class="a" style="left:1673px;top:592px;width:1px;height:34px;background:#ebebeb"></div>
<div class="a" style="left:366px;top:626px;width:1308px;height:1px;background:#ebebeb"></div>
<div class="a" style="left:378px;top:603px;width:11px;height:11px;border:2px solid #717579;border-radius:2.5px"></div>
<svg class="a" style="left:421px;top:601px" width="30" height="18" viewBox="0 0 30 18" fill="none"><circle cx="9" cy="9" r="7.4" stroke="#4a9f76" stroke-width="1.1"/><path d="M6 9.6 L8.2 11.1 L11.5 7.8" stroke="#3f9d6e" stroke-width="1.4" stroke-linecap="round" stroke-linejoin="round"/><path d="M22.9 7.6 L25.3 10 L27.7 7.6" stroke="#222" stroke-width="1.3" stroke-linecap="round" stroke-linejoin="round"/></svg>
<div class="t " style="left:478px;top:602.84px;font-size:12px;line-height:16px;color:#262626;font-weight:normal;letter-spacing:-0.15px;">Wifi height height charge</div>
<div class="t " style="left:758px;top:602.84px;font-size:12px;line-height:16px;color:#262626;font-weight:normal;letter-spacing:-0.15px;">Negative Exact</div>
<div class="t " style="left:888px;top:602.84px;font-size:12px;line-height:16px;color:#262626;font-weight:normal;letter-spacing:-0.15px;">Z6 Drones</div>
<div class="t " style="left:1107px;top:602.84px;font-size:12px;line-height:16px;color:#4472d4;font-weight:normal;letter-spacing:-0.3px;">SP_M_KT - Z6 Drones</div>
<svg class="a" style="left:1512px;top:601px" width="15" height="15" viewBox="0 0 15 15" fill="none" stroke="#6e7073" stroke-width="1.15" stroke-linecap="round" stroke-linejoin="round"><path d="M5.8 3.3 H2.8 C2.1 3.3 1.8 3.6 1.8 4.3 V12 C1.8 12.6 2.1 12.9 2.8 12.9 H10.6 C11.3 12.9 11.6 12.6 11.6 12 V9.3"/><path d="M8.4 1.8 H13.2 V6.2 M13.2 1.8 L6.6 8.4"/></svg>
<div class="a ct" style="left:1557px;top:599px">SP</div>
<div class="a ct" style="left:1586px;top:599px">KT</div>
<div class="a" style="left:405px;top:627px;width:1px;height:34px;background:#ebebeb"></div>
<div class="a" style="left:465px;top:627px;width:1px;height:34px;background:#ebebeb"></div>
<div class="a" style="left:745px;top:627px;width:1px;height:34px;background:#ebebeb"></div>
<div class="a" style="left:875px;top:627px;width:1px;height:34px;background:#ebebeb"></div>
<div class="a" style="left:1094px;top:627px;width:1px;height:34px;background:#ebebeb"></div>
<div class="a" style="left:1544px;top:627px;width:1px;height:34px;background:#ebebeb"></div>
<div class="a" style="left:1673px;top:627px;width:1px;height:34px;background:#ebebeb"></div>
<div class="a" style="left:366px;top:661px;width:1308px;height:1px;background:#ebebeb"></div>
<div class="a" style="left:378px;top:638px;width:11px;height:11px;border:2px solid #717579;border-radius:2.5px"></div>
<svg class="a" style="left:421px;top:636px" width="30" height="18" viewBox="0 0 30 18" fill="none"><circle cx="9" cy="9" r="7.4" stroke="#4a9f76" stroke-width="1.1"/><path d="M6 9.6 L8.2 11.1 L11.5 7.8" stroke="#3f9d6e" stroke-width="1.4" stroke-linecap="round" stroke-linejoin="round"/><path d="M22.9 7.6 L25.3 10 L27.7 7.6" stroke="#222" stroke-width="1.3" stroke-linecap="round" stroke-linejoin="round"/></svg>
<div class="t " style="left:478px;top:637.84px;font-size:12px;line-height:16px;color:#262626;font-weight:normal;letter-spacing:-0.15px;">Wifi height height charge</div>
<div class="t " style="left:758px;top:637.84px;font-size:12px;line-height:16px;color:#262626;font-weight:normal;letter-spacing:-0.15px;">Negative Exact</div>
<div class="t " style="left:888px;top:637.84px;font-size:12px;line-height:16px;color:#262626;font-weight:normal;letter-spacing:-0.15px;">Z5 Drones</div>
<div class="t " style="left:1107px;top:637.84px;font-size:12px;line-height:16px;color:#4472d4;font-weight:normal;letter-spacing:-0.3px;">SP_M_KT - Z5 Drones</div>
<svg class="a" style="left:1512px;top:636px" width="15" height="15" viewBox="0 0 15 15" fill="none" stroke="#6e7073" stroke-width="1.15" stroke-linecap="round" stroke-linejoin="round"><path d="M5.8 3.3 H2.8 C2.1 3.3 1.8 3.6 1.8 4.3 V12 C1.8 12.6 2.1 12.9 2.8 12.9 H10.6 C11.3 12.9 11.6 12.6 11.6 12 V9.3"/><path d="M8.4 1.8 H13.2 V6.2 M13.2 1.8 L6.6 8.4"/></svg>
<div class="a ct" style="left:1557px;top:634px">SP</div>
<div class="a ct" style="left:1586px;top:634px">KT</div>
<div class="a" style="left:405px;top:662px;width:1px;height:34px;background:#ebebeb"></div>
<div class="a" style="left:465px;top:662px;width:1px;height:34px;background:#ebebeb"></div>
<div class="a" style="left:745px;top:662px;width:1px;height:34px;background:#ebebeb"></div>
<div class="a" style="left:875px;top:662px;width:1px;height:34px;background:#ebebeb"></div>
<div class="a" style="left:1094px;top:662px;width:1px;height:34px;background:#ebebeb"></div>
<div class="a" style="left:1544px;top:662px;width:1px;height:34px;background:#ebebeb"></div>
<div class="a" style="left:1673px;top:662px;width:1px;height:34px;background:#ebebeb"></div>
<div class="a" style="left:366px;top:696px;width:1308px;height:1px;background:#ebebeb"></div>
<div class="a" style="left:378px;top:673px;width:11px;height:11px;border:2px solid #717579;border-radius:2.5px"></div>
<svg class="a" style="left:421px;top:671px" width="30" height="18" viewBox="0 0 30 18" fill="none"><circle cx="9" cy="9" r="7.4" stroke="#4a9f76" stroke-width="1.1"/><path d="M6 9.6 L8.2 11.1 L11.5 7.8" stroke="#3f9d6e" stroke-width="1.4" stroke-linecap="round" stroke-linejoin="round"/><path d="M22.9 7.6 L25.3 10 L27.7 7.6" stroke="#222" stroke-width="1.3" stroke-linecap="round" stroke-linejoin="round"/></svg>
<div class="t " style="left:478px;top:672.84px;font-size:12px;line-height:16px;color:#262626;font-weight:normal;letter-spacing:-0.15px;">weight size weight insurance</div>
<div class="t " style="left:758px;top:672.84px;font-size:12px;line-height:16px;color:#262626;font-weight:normal;letter-spacing:-0.15px;">Negative Phrase</div>
<div class="t " style="left:888px;top:672.84px;font-size:12px;line-height:16px;color:#262626;font-weight:normal;letter-spacing:-0.15px;">DD10 Drones</div>
<div class="t " style="left:1107px;top:672.84px;font-size:12px;line-height:16px;color:#4472d4;font-weight:normal;letter-spacing:-0.3px;">SP_M_KT - DD10 Drones</div>
<svg class="a" style="left:1512px;top:671px" width="15" height="15" viewBox="0 0 15 15" fill="none" stroke="#6e7073" stroke-width="1.15" stroke-linecap="round" stroke-linejoin="round"><path d="M5.8 3.3 H2.8 C2.1 3.3 1.8 3.6 1.8 4.3 V12 C1.8 12.6 2.1 12.9 2.8 12.9 H10.6 C11.3 12.9 11.6 12.6 11.6 12 V9.3"/><path d="M8.4 1.8 H13.2 V6.2 M13.2 1.8 L6.6 8.4"/></svg>
<div class="a ct" style="left:1557px;top:669px">SP</div>
<div class="a ct" style="left:1586px;top:669px">KT</div>
<div class="a" style="left:405px;top:697px;width:1px;height:34px;background:#ebebeb"></div>
<div class="a" style="left:465px;top:697px;width:1px;height:34px;background:#ebebeb"></div>
<div class="a" style="left:745px;top:697px;width:1px;height:34px;background:#ebebeb"></div>
<div class="a" style="left:875px;top:697px;width:1px;height:34px;background:#ebebeb"></div>
<div class="a" style="left:1094px;top:697px;width:1px;height:34px;background:#ebebeb"></div>
<div class="a" style="left:1544px;top:697px;width:1px;height:34px;background:#ebebeb"></div>
<div class="a" style="left:1673px;top:697px;width:1px;height:34px;background:#ebebeb"></div>
<div class="a" style="left:366px;top:731px;width:1308px;height:1px;background:#ebebeb"></div>
<div class="a" style="left:378px;top:708px;width:11px;height:11px;border:2px solid #717579;border-radius:2.5px"></div>
<svg class="a" style="left:421px;top:706px" width="30" height="18" viewBox="0 0 30 18" fill="none"><circle cx="9" cy="9" r="7.4" stroke="#4a9f76" stroke-width="1.1"/><path d="M6 9.6 L8.2 11.1 L11.5 7.8" stroke="#3f9d6e" stroke-width="1.4" stroke-linecap="round" stroke-linejoin="round"/><path d="M22.9 7.6 L25.3 10 L27.7 7.6" stroke="#222" stroke-width="1.3" stroke-linecap="round" stroke-linejoin="round"/></svg>
<div class="t " style="left:478px;top:707.84px;font-size:12px;line-height:16px;color:#262626;font-weight:normal;letter-spacing:-0.15px;">weight size weight</div>
<div class="t " style="left:758px;top:707.84px;font-size:12px;line-height:16px;color:#262626;font-weight:normal;letter-spacing:-0.15px;">Negative Phrase</div>
<div class="t " style="left:888px;top:707.84px;font-size:12px;line-height:16px;color:#262626;font-weight:normal;letter-spacing:-0.15px;">Z6 Drones</div>
<div class="t " style="left:1107px;top:707.84px;font-size:12px;line-height:16px;color:#4472d4;font-weight:normal;letter-spacing:-0.3px;">SP_M_KT - Z6 Drones</div>
<svg class="a" style="left:1512px;top:706px" width="15" height="15" viewBox="0 0 15 15" fill="none" stroke="#6e7073" stroke-width="1.15" stroke-linecap="round" stroke-linejoin="round"><path d="M5.8 3.3 H2.8 C2.1 3.3 1.8 3.6 1.8 4.3 V12 C1.8 12.6 2.1 12.9 2.8 12.9 H10.6 C11.3 12.9 11.6 12.6 11.6 12 V9.3"/><path d="M8.4 1.8 H13.2 V6.2 M13.2 1.8 L6.6 8.4"/></svg>
<div class="a ct" style="left:1557px;top:704px">SP</div>
<div class="a ct" style="left:1586px;top:704px">KT</div>
<div class="a" style="left:405px;top:732px;width:1px;height:34px;background:#ebebeb"></div>
<div class="a" style="left:465px;top:732px;width:1px;height:34px;background:#ebebeb"></div>
<div class="a" style="left:745px;top:732px;width:1px;height:34px;background:#ebebeb"></div>
<div class="a" style="left:875px;top:732px;width:1px;height:34px;background:#ebebeb"></div>
<div class="a" style="left:1094px;top:732px;width:1px;height:34px;background:#ebebeb"></div>
<div class="a" style="left:1544px;top:732px;width:1px;height:34px;background:#ebebeb"></div>
<div class="a" style="left:1673px;top:732px;width:1px;height:34px;background:#ebebeb"></div>
<div class="a" style="left:366px;top:766px;width:1308px;height:1px;background:#ebebeb"></div>
<div class="a" style="left:378px;top:743px;width:11px;height:11px;border:2px solid #717579;border-radius:2.5px"></div>
<svg class="a" style="left:421px;top:741px" width="30" height="18" viewBox="0 0 30 18" fill="none"><circle cx="9" cy="9" r="7.4" stroke="#4a9f76" stroke-width="1.1"/><path d="M6 9.6 L8.2 11.1 L11.5 7.8" stroke="#3f9d6e" stroke-width="1.4" stroke-linecap="round" stroke-linejoin="round"/><path d="M22.9 7.6 L25.3 10 L27.7 7.6" stroke="#222" stroke-width="1.3" stroke-linecap="round" stroke-linejoin="round"/></svg>
<div class="t " style="left:478px;top:742.84px;font-size:12px;line-height:16px;color:#262626;font-weight:normal;letter-spacing:-0.15px;">weight size weight</div>
<div class="t " style="left:758px;top:742.84px;font-size:12px;line-height:16px;color:#262626;font-weight:normal;letter-spacing:-0.15px;">Negative Phrase</div>
<div class="t " style="left:888px;top:742.84px;font-size:12px;line-height:16px;color:#262626;font-weight:normal;letter-spacing:-0.15px;">Z4 Drones</div>
<div class="t " style="left:1107px;top:742.84px;font-size:12px;line-height:16px;color:#4472d4;font-weight:normal;letter-spacing:-0.3px;">SP_M_KT - Z4 Drones</div>
<svg class="a" style="left:1512px;top:741px" width="15" height="15" viewBox="0 0 15 15" fill="none" stroke="#6e7073" stroke-width="1.15" stroke-linecap="round" stroke-linejoin="round"><path d="M5.8 3.3 H2.8 C2.1 3.3 1.8 3.6 1.8 4.3 V12 C1.8 12.6 2.1 12.9 2.8 12.9 H10.6 C11.3 12.9 11.6 12.6 11.6 12 V9.3"/><path d="M8.4 1.8 H13.2 V6.2 M13.2 1.8 L6.6 8.4"/></svg>
<div class="a ct" style="left:1557px;top:739px">SP</div>
<div class="a ct" style="left:1586px;top:739px">KT</div>
<div class="a" style="left:405px;top:767px;width:1px;height:34px;background:#ebebeb"></div>
<div class="a" style="left:465px;top:767px;width:1px;height:34px;background:#ebebeb"></div>
<div class="a" style="left:745px;top:767px;width:1px;height:34px;background:#ebebeb"></div>
<div class="a" style="left:875px;top:767px;width:1px;height:34px;background:#ebebeb"></div>
<div class="a" style="left:1094px;top:767px;width:1px;height:34px;background:#ebebeb"></div>
<div class="a" style="left:1544px;top:767px;width:1px;height:34px;background:#ebebeb"></div>
<div class="a" style="left:1673px;top:767px;width:1px;height:34px;background:#ebebeb"></div>
<div class="a" style="left:366px;top:801px;width:1308px;height:1px;background:#ebebeb"></div>
<div class="a" style="left:378px;top:778px;width:11px;height:11px;border:2px solid #717579;border-radius:2.5px"></div>
<svg class="a" style="left:421px;top:776px" width="30" height="18" viewBox="0 0 30 18" fill="none"><circle cx="9" cy="9" r="7.4" stroke="#4a9f76" stroke-width="1.1"/><path d="M6 9.6 L8.2 11.1 L11.5 7.8" stroke="#3f9d6e" stroke-width="1.4" stroke-linecap="round" stroke-linejoin="round"/><path d="M22.9 7.6 L25.3 10 L27.7 7.6" stroke="#222" stroke-width="1.3" stroke-linecap="round" stroke-linejoin="round"/></svg>
<div class="t " style="left:478px;top:777.84px;font-size:12px;line-height:16px;color:#262626;font-weight:normal;letter-spacing:-0.15px;">weight size weight</div>
<div class="t " style="left:758px;top:777.84px;font-size:12px;line-height:16px;color:#262626;font-weight:normal;letter-spacing:-0.15px;">Negative Phrase</div>
<div class="t " style="left:888px;top:777.84px;font-size:12px;line-height:16px;color:#262626;font-weight:normal;letter-spacing:-0.15px;">Z5 Drones</div>
<div class="t " style="left:1107px;top:777.84px;font-size:12px;line-height:16px;color:#4472d4;font-weight:normal;letter-spacing:-0.3px;">SP_M_KT - Z5 Drones</div>
<svg class="a" style="left:1512px;top:776px" width="15" height="15" viewBox="0 0 15 15" fill="none" stroke="#6e7073" stroke-width="1.15" stroke-linecap="round" stroke-linejoin="round"><path d="M5.8 3.3 H2.8 C2.1 3.3 1.8 3.6 1.8 4.3 V12 C1.8 12.6 2.1 12.9 2.8 12.9 H10.6 C11.3 12.9 11.6 12.6 11.6 12 V9.3"/><path d="M8.4 1.8 H13.2 V6.2 M13.2 1.8 L6.6 8.4"/></svg>
<div class="a ct" style="left:1557px;top:774px">SP</div>
<div class="a ct" style="left:1586px;top:774px">KT</div>
<div class="a" style="left:405px;top:802px;width:1px;height:34px;background:#ebebeb"></div>
<div class="a" style="left:465px;top:802px;width:1px;height:34px;background:#ebebeb"></div>
<div class="a" style="left:745px;top:802px;width:1px;height:34px;background:#ebebeb"></div>
<div class="a" style="left:875px;top:802px;width:1px;height:34px;background:#ebebeb"></div>
<div class="a" style="left:1094px;top:802px;width:1px;height:34px;background:#ebebeb"></div>
<div class="a" style="left:1544px;top:802px;width:1px;height:34px;background:#ebebeb"></div>
<div class="a" style="left:1673px;top:802px;width:1px;height:34px;background:#ebebeb"></div>
<div class="a" style="left:366px;top:836px;width:1308px;height:1px;background:#ebebeb"></div>
<div class="a" style="left:378px;top:813px;width:11px;height:11px;border:2px solid #717579;border-radius:2.5px"></div>
<svg class="a" style="left:421px;top:811px" width="30" height="18" viewBox="0 0 30 18" fill="none"><circle cx="9" cy="9" r="7.4" stroke="#4a9f76" stroke-width="1.1"/><path d="M6 9.6 L8.2 11.1 L11.5 7.8" stroke="#3f9d6e" stroke-width="1.4" stroke-linecap="round" stroke-linejoin="round"/><path d="M22.9 7.6 L25.3 10 L27.7 7.6" stroke="#222" stroke-width="1.3" stroke-linecap="round" stroke-linejoin="round"/></svg>
<div class="t " style="left:478px;top:812.84px;font-size:12px;line-height:16px;color:#262626;font-weight:normal;letter-spacing:-0.15px;">weight height weight</div>
<div class="t " style="left:758px;top:812.84px;font-size:12px;line-height:16px;color:#262626;font-weight:normal;letter-spacing:-0.15px;">Negative Exact</div>
<div class="t " style="left:888px;top:812.84px;font-size:12px;line-height:16px;color:#262626;font-weight:normal;letter-spacing:-0.15px;">S2 Drones</div>
<div class="t " style="left:1107px;top:812.84px;font-size:12px;line-height:16px;color:#4472d4;font-weight:normal;letter-spacing:-0.3px;">SP_M_KT - S2 Drones</div>
<svg class="a" style="left:1512px;top:811px" width="15" height="15" viewBox="0 0 15 15" fill="none" stroke="#6e7073" stroke-width="1.15" stroke-linecap="round" stroke-linejoin="round"><path d="M5.8 3.3 H2.8 C2.1 3.3 1.8 3.6 1.8 4.3 V12 C1.8 12.6 2.1 12.9 2.8 12.9 H10.6 C11.3 12.9 11.6 12.6 11.6 12 V9.3"/><path d="M8.4 1.8 H13.2 V6.2 M13.2 1.8 L6.6 8.4"/></svg>
<div class="a ct" style="left:1557px;top:809px">SP</div>
<div class="a ct" style="left:1586px;top:809px">KT</div>
</body></html>
